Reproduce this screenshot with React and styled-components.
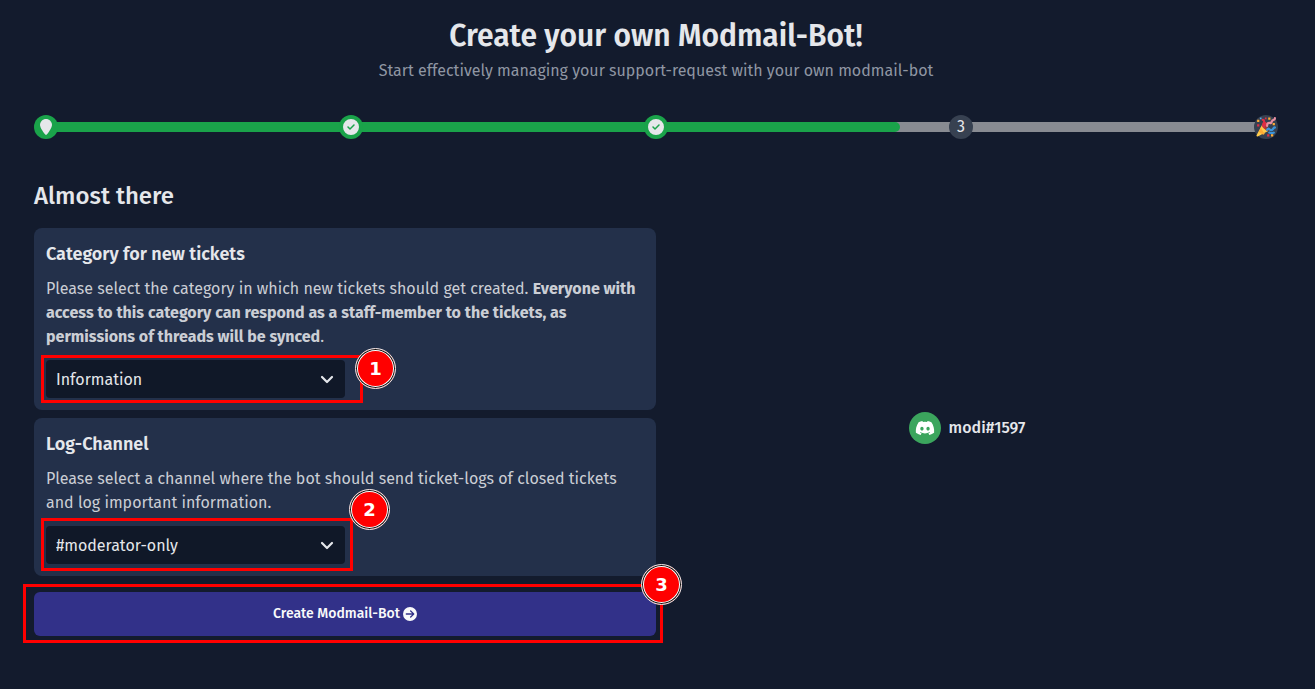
import React from "react";
import styled, { createGlobalStyle } from "styled-components";
import { FaCircleArrowRight, FaCircleCheck, FaLocationPin, FaDiscord } from "react-icons/fa6";

const GlobalStyle = createGlobalStyle`
  * { box-sizing: border-box; }
  body {
    margin: 0;
    background: #131b2d;
    color: #e5e7eb;
    font-family: "Fira Sans", "Noto Sans", sans-serif;
    font-size: 16px;
    line-height: 24px;
  }
  h1, h2, h3, p { margin: 0; }
`;

const Page = styled.main`
  padding: 18px 37px 45px 34px;
`;

const Header = styled.header`
  text-align: center;
  margin-bottom: 32px;
`;

const Title = styled.h1`
  font-size: 30px;
  line-height: 36px;
  font-weight: 600;
`;

const Subtitle = styled.p`
  margin-top: 5px;
  color: #8f96a3;
`;

const Progress = styled.div`
  display: grid;
  align-items: center;
  margin-bottom: 41px;

  > * { grid-area: 1 / 1; }
`;

const Track = styled.div`
  height: 10px;
  margin: 0 12px;
  background: #888b92;
`;

const Fill = styled.div`
  width: ${(p) => p.$percent}%;
  height: 100%;
  border-radius: 0 5px 5px 0;
  background: #1aa34a;
`;

const Steps = styled.ol`
  display: flex;
  justify-content: space-between;
  margin: 0;
  padding: 0;
  list-style: none;
`;

const Step = styled.li`
  display: grid;
  place-items: center;
  width: 24px;
  height: 24px;
  border-radius: 50%;
  background: ${(p) => (p.$done ? "#1aa34a" : "#374151")};

  svg { display: block; }
`;

const Heading = styled.h2`
  font-size: 24px;
  line-height: 32px;
  font-weight: 500;
  margin-bottom: 8px;
`;

const Columns = styled.div`
  display: grid;
  grid-template-columns: 1fr 1fr;
  align-items: center;
`;

const Form = styled.form`
  display: flex;
  flex-direction: column;
  gap: 8px;
  padding-top: 8px;
`;

const Card = styled.section`
  padding: 12px;
  border-radius: 8px;
  background: #23304a;
`;

const CardTitle = styled.h3`
  font-size: 18px;
  line-height: 28px;
  font-weight: 600;

  label { display: block; }
`;

const CardText = styled.p`
  margin: 9px 0 11px;
  color: #cbced5;

  strong { font-weight: 700; }
`;

const Field = styled.div`
  position: relative;
  width: 299px;
  max-width: 100%;

  > svg {
    position: absolute;
    right: 11px;
    top: 12px;
    pointer-events: none;
  }
`;

const Select = styled.select`
  display: block;
  appearance: none;
  width: 100%;
  height: 38px;
  padding: 2px 36px 0 10px;
  border: 0;
  border-radius: 4px;
  background: #101828;
  color: #e5e7eb;
  font: inherit;
`;

const Submit = styled.div`
  position: relative;
  margin-top: 8px;
`;

const SubmitButton = styled.button`
  display: flex;
  align-items: center;
  justify-content: center;
  gap: 3px;
  width: 100%;
  height: 44px;
  border: 0;
  border-radius: 6px;
  background: #323189;
  color: #f9fafb;
  font: inherit;
  font-size: 14px;
  font-weight: 500;
`;

const Frame = styled.div`
  position: absolute;
  inset: ${(p) => p.$inset};
  border: 3px solid #ff0000;
  pointer-events: none;
`;

const Marker = styled.span`
  position: absolute;
  top: ${(p) => p.$top};
  right: ${(p) => p.$right};
  display: grid;
  place-items: center;
  width: 41px;
  height: 41px;
  border: 1px solid #e8e8e8;
  border-radius: 50%;
  background: #ff0000;
  box-shadow: inset 0 0 0 1px #111111, inset 0 0 0 2px #ffffff;
  color: #ffffff;
  font: bold 18px/24px "DejaVu Sans", sans-serif;
`;

const User = styled.div`
  display: flex;
  align-items: center;
  justify-content: center;
  gap: 8px;
  font-weight: 500;
`;

const Avatar = styled.span`
  display: grid;
  place-items: center;
  width: 32px;
  height: 32px;
  border-radius: 50%;
  background: #3ba55d;
  color: #ffffff;
`;

function Chevron() {
  return (
    <svg width="14" height="14" viewBox="0 0 14 14" aria-hidden="true">
      <path d="M2 5l5 5 5-5" fill="none" stroke="#e5e7eb" strokeWidth="2.200" strokeLinecap="round" strokeLinejoin="round" />
    </svg>
  );
}

function PartyPopper() {
  return (
    <svg width="20" height="20" viewBox="0 0 36 36" role="img" aria-label="Finished">
      <path fill="#ffcc4d" d="M11 14 1 33c-.6 1.500.5 2.500 2 2l19-10C21 21 16 14 11 14z" />
      <path fill="#ffac33" d="m9 18-4 9 8 5 3-2C12 26 10 22 9 18z" />
      <ellipse cx="17" cy="19" rx="3" ry="8" transform="rotate(-45 17 19)" fill="#a33b35" />
      <path fill="none" stroke="#dd2e44" strokeWidth="4" strokeLinecap="round" d="M14 18c-3-5 0-9 3-7s-1 6-2 2 1-8-3-8" />
      <path fill="none" stroke="#ea8fa2" strokeWidth="4" strokeLinecap="round" d="M20 16c0-5 2-6 6-5 3 1 1-6 6-6 2 0 2-2 2-3" />
      <path fill="none" stroke="#3b94d9" strokeWidth="4" strokeLinecap="round" d="M20 23c3-6 5 3 9 0s3-5 5-4M24 28c2 1 5 2 8 0" />
      <path fill="#ffac33" d="M2 5h4v4H2zM22 1h4v4h-4zM30 11h4v4h-4zM27 31h4v4h-4z" />
      <path fill="#dd2e44" d="M2 13h4v4H2zM16 1h3v3h-3zM20 31h4v4h-4z" />
      <path fill="#55acee" d="M7 1h3v3H7z" />
    </svg>
  );
}

function Annotation({ label, inset, top, right }) {
  return (
    <Frame $inset={inset}>
      <Marker $top={top} $right={right}>{label}</Marker>
    </Frame>
  );
}

export default function App() {
  return (
    <>
      <GlobalStyle />
      <Page>
        <Header>
          <Title>Create your own Modmail-Bot!</Title>
          <Subtitle>Start effectively managing your support-request with your own modmail-bot</Subtitle>
        </Header>

        <Progress>
          <Track><Fill $percent={70} /></Track>
          <Steps>
            <Step $done><FaLocationPin size={16} /></Step>
            <Step $done><FaCircleCheck size={16} /></Step>
            <Step $done><FaCircleCheck size={16} /></Step>
            <Step>3</Step>
            <Step><PartyPopper /></Step>
          </Steps>
        </Progress>

        <Heading>Almost there</Heading>
        <Columns>
          <Form onSubmit={(e) => e.preventDefault()}>
            <Card>
              <CardTitle><label htmlFor="category">Category for new tickets</label></CardTitle>
              <CardText>
                Please select the category in which new tickets should get created.{" "}
                <strong>
                  Everyone with access to this category can respond as a staff-member to the tickets, as
                  permissions of threads will be synced
                </strong>.
              </CardText>
              <Field>
                <Select id="category"><option>Information</option></Select>
                <Chevron />
                <Annotation label="1" inset="-5px -18px -5px -5px" top="-10px" right="-36px" />
              </Field>
            </Card>

            <Card>
              <CardTitle><label htmlFor="log-channel">Log-Channel</label></CardTitle>
              <CardText>
                Please select a channel where the bot should send ticket-logs of closed tickets and log
                important information.
              </CardText>
              <Field>
                <Select id="log-channel"><option>#moderator-only</option></Select>
                <Chevron />
                <Annotation label="2" inset="-8px -8px -7px -5px" top="-32px" right="-40px" />
              </Field>
            </Card>

            <Submit>
              <SubmitButton type="submit">
                Create Modmail-Bot
                <FaCircleArrowRight size={14} />
              </SubmitButton>
              <Annotation label="3" inset="-8px -7px -7px -11px" top="-23px" right="-22px" />
            </Submit>
          </Form>

          <User>
            <Avatar><FaDiscord size={20} /></Avatar>
            modi#1597
          </User>
        </Columns>
      </Page>
    </>
  );
}
